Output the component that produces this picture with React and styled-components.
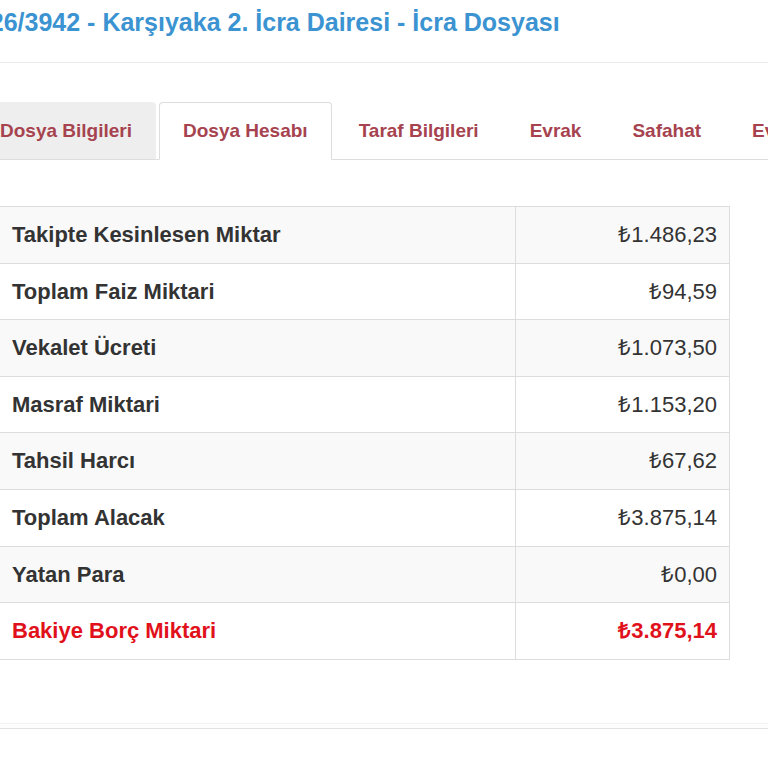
import styled, { createGlobalStyle } from "styled-components";

const GlobalStyle = createGlobalStyle`
  html, body {
    margin: 0;
    padding: 0;
    background: #fff;
    overflow: hidden;
  }
  body {
    font-family: "Liberation Sans", Arial, sans-serif;
    color: #333;
  }
`;

const rows = [
  { label: "Takipte Kesinlesen Miktar", value: "₺1.486,23" },
  { label: "Toplam Faiz Miktari", value: "₺94,59" },
  { label: "Vekalet Ücreti", value: "₺1.073,50" },
  { label: "Masraf Miktari", value: "₺1.153,20" },
  { label: "Tahsil Harcı", value: "₺67,62" },
  { label: "Toplam Alacak", value: "₺3.875,14" },
  { label: "Yatan Para", value: "₺0,00" },
  { label: "Bakiye Borç Miktari", value: "₺3.875,14", total: true },
];

const tabs = [
  { name: "Dosya Bilgileri", state: "hover" },
  { name: "Dosya Hesabı", state: "active" },
  { name: "Taraf Bilgileri" },
  { name: "Evrak" },
  { name: "Safahat" },
  { name: "Evrak Gönder" },
];

const App = () => {
  return (
    <>
      <GlobalStyle />
      <Page>
        <Header>
          <Title>2026/3942 - Karşıyaka 2. İcra Dairesi - İcra Dosyası</Title>
        </Header>
        <Tabs>
          {tabs.map((t) => (
            <Tab key={t.name} $state={t.state}>
              {t.name}
            </Tab>
          ))}
        </Tabs>
        <Table>
          <tbody>
            {rows.map((r, i) => (
              <Row key={r.label} $striped={i % 2 === 0}>
                <Label $total={r.total}>{r.label}</Label>
                <Value $total={r.total}>{r.value}</Value>
              </Row>
            ))}
          </tbody>
        </Table>
        <Footer />
      </Page>
    </>
  );
};

export default App;

const Page = styled.div`
  width: 900px;
  margin-left: -24px;
`;

const Header = styled.div`
  padding: 7px 0 25px;
  border-bottom: 1px solid #ececec;
`;

const Title = styled.h3`
  margin: 0 0 0 -14px;
  font-size: 25px;
  line-height: 30px;
  font-weight: bold;
  color: #3b93d1;
  white-space: nowrap;
`;

const Tabs = styled.ul`
  display: flex;
  list-style: none;
  margin: 39px 0 0;
  padding: 0;
  border-bottom: 1px solid #ddd;
`;

const Tab = styled.li`
  flex: none;
  margin-right: 3px;
  margin-bottom: -1px;
  padding: 14px 23px;
  line-height: 28px;
  font-size: 19px;
  font-weight: bold;
  color: #a6434f;
  white-space: nowrap;
  border: 1px solid transparent;
  border-radius: 4px 4px 0 0;
  background: ${(p) =>
    p.$state === "hover" ? "#eee" : p.$state === "active" ? "#fff" : "transparent"};
  border-color: ${(p) =>
    p.$state === "active"
      ? "#ddd #ddd transparent"
      : p.$state === "hover"
      ? "#eee #eee #ddd"
      : "transparent"};
`;

const Table = styled.table`
  margin: 46px 0 0 23px;
  width: 731px;
  border-collapse: collapse;
  border: 1px solid #ddd;
  font-size: 22px;
`;

const Row = styled.tr`
  background: ${(p) => (p.$striped ? "#f9f9f9" : "#fff")};
`;

const Label = styled.td`
  width: 491px;
  padding: 12px 12px;
  line-height: 31.6px;
  border-top: 1px solid #ddd;
  border-right: 1px solid #ddd;
  font-weight: bold;
  color: ${(p) => (p.$total ? "#e1111b" : "#333")};
`;

const Value = styled.td`
  padding: 12px 12px;
  line-height: 31.6px;
  border-top: 1px solid #ddd;
  text-align: right;
  font-weight: ${(p) => (p.$total ? "bold" : "normal")};
  color: ${(p) => (p.$total ? "#e1111b" : "#333")};
`;

const Footer = styled.div`
  margin-top: 63px;
  height: 4px;
  border-top: 1px solid #f3f3f3;
  border-bottom: 1px solid #e2e2e2;
  background: #fdfdfd;
`;
